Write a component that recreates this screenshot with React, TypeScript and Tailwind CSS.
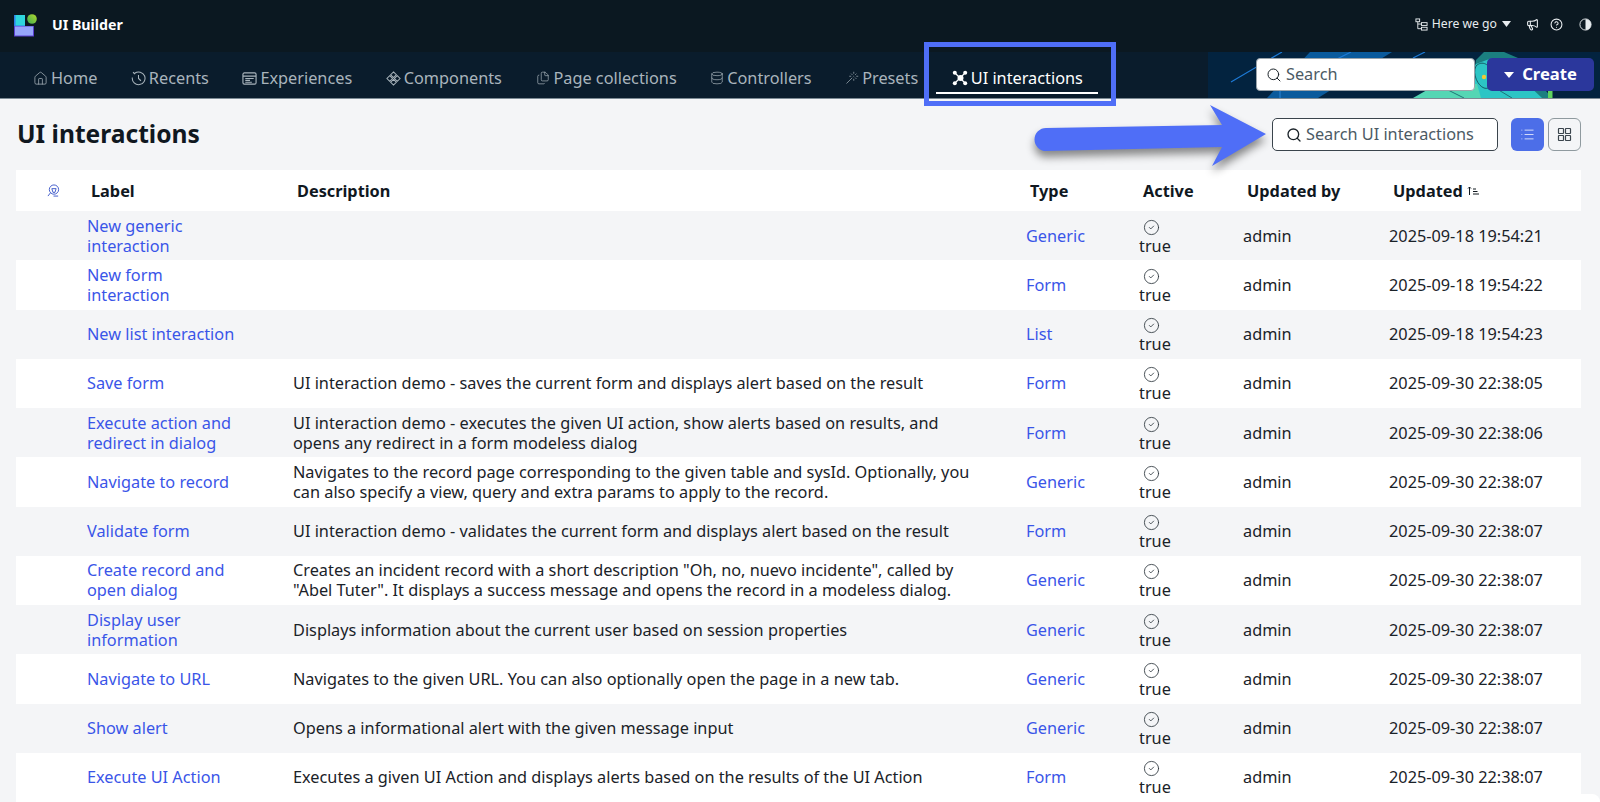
import { CircleCheck, CircleHelp, Database, Files, House, List, Megaphone, Search, Wand } from "lucide-react";
import type { ReactNode } from "react";

const rows = [
  { label: "New generic interaction", description: "", type: "Generic", updated: "2025-09-18 19:54:21" },
  { label: "New form interaction", description: "", type: "Form", updated: "2025-09-18 19:54:22" },
  { label: "New list interaction", description: "", type: "List", updated: "2025-09-18 19:54:23" },
  { label: "Save form", description: "UI interaction demo - saves the current form and displays alert based on the result", type: "Form", updated: "2025-09-30 22:38:05" },
  { label: "Execute action and redirect in dialog", description: "UI interaction demo - executes the given UI action, show alerts based on results, and opens any redirect in a form modeless dialog", type: "Form", updated: "2025-09-30 22:38:06" },
  { label: "Navigate to record", description: "Navigates to the record page corresponding to the given table and sysId. Optionally, you can also specify a view, query and extra params to apply to the record.", type: "Generic", updated: "2025-09-30 22:38:07" },
  { label: "Validate form", description: "UI interaction demo - validates the current form and displays alert based on the result", type: "Form", updated: "2025-09-30 22:38:07" },
  { label: "Create record and open dialog", description: "Creates an incident record with a short description \"Oh, no, nuevo incidente\", called by \"Abel Tuter\". It displays a success message and opens the record in a modeless dialog.", type: "Generic", updated: "2025-09-30 22:38:07" },
  { label: "Display user information", description: "Displays information about the current user based on session properties", type: "Generic", updated: "2025-09-30 22:38:07" },
  { label: "Navigate to URL", description: "Navigates to the given URL. You can also optionally open the page in a new tab.", type: "Generic", updated: "2025-09-30 22:38:07" },
  { label: "Show alert", description: "Opens a informational alert with the given message input", type: "Generic", updated: "2025-09-30 22:38:07" },
  { label: "Execute UI Action", description: "Executes a given UI Action and displays alerts based on the results of the UI Action", type: "Form", updated: "2025-09-30 22:38:07" },
];

function RecentIcon() {
  return (
    <svg width="15" height="15" viewBox="0 0 16 16" fill="none" stroke="currentColor" strokeWidth="1.1">
      <path d="M4 2.4A6.8 6.8 0 1 1 1.4 7M2.2 1.2L4 3.4M8 4.2V8l2.6 2.4" />
    </svg>
  );
}

function ExperienceIcon() {
  return (
    <svg width="15" height="15" viewBox="0 0 16 16" fill="none" stroke="currentColor" strokeWidth="1.2">
      <rect x="1" y="2" width="14" height="12" rx="1.5" />
      <path d="M1 5.5h14M3.5 8h9M3.5 10h5M3.5 12h7" />
    </svg>
  );
}

function ComponentIcon() {
  return (
    <svg width="15" height="15" viewBox="0 0 16 16" fill="none" stroke="currentColor" strokeWidth="1.1">
      <path d="M8 1l3 3-3 3-3-3zM4 5l3 3-3 3-3-3zM12 5l3 3-3 3-3-3zM8 9l3 3-3 3-3-3z" />
    </svg>
  );
}

function InteractionIcon() {
  return (
    <svg width="16" height="16" viewBox="0 0 16 16" fill="currentColor" stroke="currentColor">
      <path d="M3 3l10 10M13 3L3 13" strokeWidth="1.3" />
      <circle cx="8.5" cy="8" r="3" stroke="none" />
      <circle cx="2.8" cy="2.8" r="2" stroke="none" />
      <circle cx="13.2" cy="2.8" r="2" stroke="none" />
      <circle cx="2.8" cy="13.2" r="2" stroke="none" />
      <circle cx="13.2" cy="13.2" r="2" stroke="none" />
    </svg>
  );
}

function Logo() {
  return (
    <svg width="25" height="25" viewBox="0 0 25 25">
      <defs>
        <linearGradient id="logoBall" x1="1" y1="0" x2="0" y2="1">
          <stop offset="0" stopColor="#b4d82c" />
          <stop offset="1" stopColor="#3fae52" />
        </linearGradient>
      </defs>
      <rect x="1" y="3" width="11" height="11" fill="#2f7de8" />
      <rect x="2.5" y="3" width="9.5" height="10.5" fill="#2fd6dc" />
      <rect x="1" y="14" width="20" height="10.5" fill="#5a3fd0" />
      <rect x="2" y="14.5" width="18" height="9" fill="#97a6fb" />
      <circle cx="19" cy="7" r="4.8" fill="url(#logoBall)" />
    </svg>
  );
}

function NavItem({ icon, label, active }: { icon: ReactNode; label: string; active?: boolean }) {
  return (
    <div className={active ? "relative flex h-full w-[162px] items-center gap-[3px] pl-[16px] pt-[6px] text-white" : "flex h-full items-center gap-[3px] pr-[33.5px] pt-[6px] text-[#a9b4bc]"}>
      {icon}
      <span>{label}</span>
      {active && <div className="absolute bottom-[4px] left-0 h-[2px] w-full bg-white" />}
    </div>
  );
}

function HeaderCell({ children }: { children: ReactNode }) {
  return <div className="pl-1 pt-[1px] font-bold text-[#10181f]">{children}</div>;
}

function Illustration() {
  return (
    <svg className="absolute right-0 top-0 h-[46px] w-[392px]" viewBox="0 0 392 46">
      <rect width="392" height="46" fill="#03233f" />
      <path d="M102 0h82L110 46H59z" fill="#0a5a9c" />
      <path d="M23 30L74 0M125 9L143 0M205 6L217 0" stroke="#1d7ad6" strokeWidth="1.2" fill="none" />
      <path d="M72 38v8" stroke="#2b86d8" strokeWidth="1" />
      <path d="M262 46L268 8l8-8h20l14 6 34 40z" fill="#1b7f80" />
      <path d="M250 46L268 12l16-6 14 6 36 34z" fill="#2cc5c5" />
      <path d="M205 46l28-16 36 2 4 14z" fill="#55d6b4" />
      <path d="M268 14c6-6 14-2 16 8s-2 16-8 14-12-14-8-22z" fill="none" stroke="#155c66" />
      <path d="M240 38l16 8M284 34l20 12" stroke="#155c66" strokeWidth="0.8" />
      <circle cx="276" cy="25" r="2.2" fill="#f3c933" />
      <rect x="340" y="39" width="4.5" height="7" fill="#5fd35f" />
    </svg>
  );
}

export default function App() {
  return (
    <div className="relative h-[802px] w-full overflow-hidden bg-[#f4f5f7] font-['Noto_Sans',sans-serif] text-[16.3px] text-[#1a2228]">
      {/* top bar */}
      <div className="flex h-[52px] items-center justify-between bg-[#0b1821] pb-[3px] pl-[13px] pr-[8px] text-white">
        <div className="flex items-center gap-[14px]">
          <Logo />
          <span className="text-[14.2px] font-bold">UI Builder</span>
        </div>
        <div className="flex items-center text-[12.2px] text-[#e8ecef]">
          <svg width="13" height="13" viewBox="0 0 14 14" fill="none" stroke="currentColor" strokeWidth="1" className="mr-[4px]">
            <rect x="1" y="1" width="4" height="3" />
            <rect x="7" y="5" width="6" height="3" />
            <rect x="7" y="10" width="6" height="3" />
            <path d="M3 4v7.5h4M3 6.5h4" />
          </svg>
          <span>Here we go</span>
          <svg width="9" height="6" viewBox="0 0 9 6" className="ml-[5px] mr-[15px]" fill="currentColor">
            <path d="M0 0h9L4.5 6z" />
          </svg>
          <Megaphone size={13} className="mr-[11px]" />
          <CircleHelp size={13} className="mr-[16px]" />
          <svg width="13" height="13" viewBox="0 0 14 14">
            <circle cx="7" cy="7" r="6" fill="none" stroke="currentColor" />
            <path d="M7 1a6 6 0 0 1 0 12z" fill="currentColor" />
          </svg>
        </div>
      </div>

      {/* nav */}
      <div className="relative flex h-[47px] items-center border-b border-[#7c8a94] bg-[#0a1c2c] pl-[33px]">
        <NavItem icon={<House size={15} strokeWidth={1.2} />} label="Home" />
        <NavItem icon={<RecentIcon />} label="Recents" />
        <NavItem icon={<ExperienceIcon />} label="Experiences" />
        <NavItem icon={<ComponentIcon />} label="Components" />
        <NavItem icon={<Files size={14} strokeWidth={1.2} className="ml-[1px]" />} label="Page collections" />
        <NavItem icon={<Database size={14} strokeWidth={1.2} />} label="Controllers" />
        <div className="-mr-[16px] h-full">
          <NavItem icon={<Wand size={14} strokeWidth={1.2} />} label="Presets" />
        </div>
        <NavItem active icon={<InteractionIcon />} label="UI interactions" />
        <Illustration />
        <div className="absolute left-[1256px] top-[6px] flex h-[33px] w-[219px] items-center gap-[4px] rounded-[4px] border border-[#9aa3aa] bg-white pl-[9px] text-[#4c5a64]">
          <Search size={16} strokeWidth={1.5} className="text-[#1a2228]" />
          <span>Search</span>
        </div>
        <div className="absolute left-[1487px] top-[6px] flex h-[33px] w-[107px] items-center justify-center gap-[8px] rounded-[5px] bg-[#2b379c] text-[16.6px] font-bold text-white">
          <svg width="10" height="6" viewBox="0 0 10 6" fill="currentColor">
            <path d="M0 0h10L5 6z" />
          </svg>
          <span>Create</span>
        </div>
      </div>

      {/* page title */}
      <div className="flex h-[71px] items-center justify-between pl-[17px] pr-[19px]">
        <h1 className="text-[24.6px] font-bold text-[#10181f]">UI interactions</h1>
        <div className="flex items-center">
          <div className="flex h-[33px] w-[226px] items-center gap-[4px] rounded-[5px] border border-[#3a444c] bg-white pl-[13px] text-[#4c5a64]">
            <Search size={16} strokeWidth={2} className="text-[#1a2228]" />
            <span>Search UI interactions</span>
          </div>
          <div className="ml-[13px] flex h-[33px] w-[33px] items-center justify-center rounded-[6px] bg-[#4c6ee8] text-white">
            <List size={15} strokeWidth={1.2} />
          </div>
          <div className="ml-[4px] flex h-[33px] w-[33px] items-center justify-center rounded-[6px] border-[1.5px] border-[#8f9a9f] text-[#3a444c]">
            <svg width="15" height="15" viewBox="0 0 15 15" fill="none" stroke="currentColor" strokeWidth="1.2">
              <rect x="1.5" y="1.5" width="5" height="5" rx="0.5" />
              <rect x="8.5" y="1.5" width="5" height="5" rx="0.5" />
              <rect x="1.5" y="8.5" width="5" height="5" rx="0.5" />
              <rect x="8.5" y="8.5" width="5" height="5" rx="0.5" />
            </svg>
          </div>
        </div>
      </div>

      {/* table */}
      <div className="mx-[16px] w-[1565px]">
        <div className="grid h-[41px] grid-cols-[71px_206px_733px_113px_104px_146px_192px] items-center bg-white">
          <div className="flex justify-center pl-[4px] text-[#3a55c8]">
            <svg width="13" height="13" viewBox="0 0 14 14" fill="none" stroke="currentColor" strokeWidth="1">
              <circle cx="7.5" cy="6" r="5" />
              <path d="M5.2 5h4.6L8.6 9H6.4zM3.8 9.5L1 13M7 13h5" />
            </svg>
          </div>
          <HeaderCell>Label</HeaderCell>
          <HeaderCell>Description</HeaderCell>
          <HeaderCell>Type</HeaderCell>
          <HeaderCell>Active</HeaderCell>
          <HeaderCell>Updated by</HeaderCell>
          <div className="flex items-center gap-[4px] pl-1 pt-[1px] font-bold text-[#10181f]">
            Updated
            <svg width="12" height="10" viewBox="0 0 12 10" fill="none" stroke="currentColor" strokeWidth="1">
              <path d="M2.5 9V1M1 2.5L2.5 1 4 2.5M6 3h3M6 5.5h4.5M6 8h6" />
            </svg>
          </div>
        </div>
        {rows.map((row, i) => (
          <div key={row.label} className={i % 2 === 0 ? "grid h-[49.25px] grid-cols-[71px_206px_733px_113px_104px_146px_192px] items-center leading-[20px]" : "grid h-[49.25px] grid-cols-[71px_206px_733px_113px_104px_146px_192px] items-center bg-white leading-[20px]"}>
            <div />
            <div className="w-[155px] text-[#3a55e8]">{row.label}</div>
            <div className="w-[685px]">{row.description}</div>
            <div className="text-[#3a55e8]">{row.type}</div>
            <div className="flex flex-col items-start pt-[3px]">
              <CircleCheck size={17} strokeWidth={1.2} className="ml-[4px] text-[#2e373e]" />
              <span className="leading-[20px]">true</span>
            </div>
            <div>admin</div>
            <div>{row.updated}</div>
          </div>
        ))}
      </div>

      {/* annotations */}
      <div className="absolute left-[924px] top-[42px] h-[64px] w-[192px] border-[5px] border-[#4f6ef7]" />
      <svg className="absolute left-[1030px] top-[100px] h-[75px] w-[245px] drop-shadow-[0_6px_4px_rgba(0,0,0,0.45)]" viewBox="0 0 245 75">
        <path d="M16 28L192 25 180 5 236 34 182 66 192 47 16 51A11.5 11.5 0 0 1 16 28z" fill="#4f6ef7" />
      </svg>
      <div className="absolute left-[1421px] top-[794px] h-[20px] w-[179px] rounded-t-[8px] bg-white" />
    </div>
  );
}
